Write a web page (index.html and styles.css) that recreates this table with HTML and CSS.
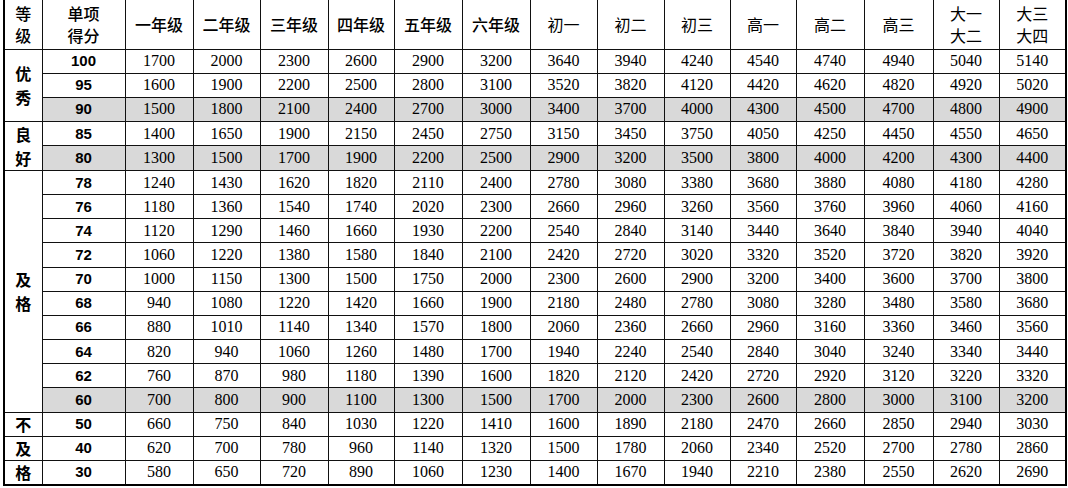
FILE: index.html
```html
<!DOCTYPE html>
<html lang="zh">
<head>
<meta charset="utf-8">
<title>跳绳评分表</title>
<link rel="stylesheet" href="styles.css">
</head>
<body>
<table class="score">
  <colgroup>
    <col class="c-grade"><col class="c-score">
    <col class="c68"><col class="c67"><col class="c68"><col class="c66"><col class="c68"><col class="c68">
    <col class="c67"><col class="c67"><col class="c66"><col class="c66"><col class="c68"><col class="c69"><col class="c66"><col class="c67">
  </colgroup>
  <thead>
    <tr class="head">
      <th class="hg">等<br>级</th>
      <th class="hg">单项<br>得分</th>
      <th>一年级</th><th>二年级</th><th>三年级</th><th>四年级</th><th>五年级</th><th>六年级</th>
      <th class="thin">初一</th><th class="thin">初二</th><th class="thin">初三</th>
      <th class="thin">高一</th><th class="thin">高二</th><th class="thin">高三</th>
      <th class="thin two">大一<br>大二</th><th class="thin two">大三<br>大四</th>
    </tr>
  </thead>
  <tbody>
    <tr class="grp-start"><td class="grp" rowspan="3">优<br>秀</td><td class="pts">100</td><td class="num">1700</td><td class="num">2000</td><td class="num">2300</td><td class="num">2600</td><td class="num">2900</td><td class="num">3200</td><td class="num">3640</td><td class="num">3940</td><td class="num">4240</td><td class="num">4540</td><td class="num">4740</td><td class="num">4940</td><td class="num">5040</td><td class="num">5140</td></tr>
    <tr><td class="pts">95</td><td class="num">1600</td><td class="num">1900</td><td class="num">2200</td><td class="num">2500</td><td class="num">2800</td><td class="num">3100</td><td class="num">3520</td><td class="num">3820</td><td class="num">4120</td><td class="num">4420</td><td class="num">4620</td><td class="num">4820</td><td class="num">4920</td><td class="num">5020</td></tr>
    <tr class="shade"><td class="pts">90</td><td class="num">1500</td><td class="num">1800</td><td class="num">2100</td><td class="num">2400</td><td class="num">2700</td><td class="num">3000</td><td class="num">3400</td><td class="num">3700</td><td class="num">4000</td><td class="num">4300</td><td class="num">4500</td><td class="num">4700</td><td class="num">4800</td><td class="num">4900</td></tr>

    <tr class="grp-start"><td class="grp" rowspan="2">良<br>好</td><td class="pts">85</td><td class="num">1400</td><td class="num">1650</td><td class="num">1900</td><td class="num">2150</td><td class="num">2450</td><td class="num">2750</td><td class="num">3150</td><td class="num">3450</td><td class="num">3750</td><td class="num">4050</td><td class="num">4250</td><td class="num">4450</td><td class="num">4550</td><td class="num">4650</td></tr>
    <tr class="shade"><td class="pts">80</td><td class="num">1300</td><td class="num">1500</td><td class="num">1700</td><td class="num">1900</td><td class="num">2200</td><td class="num">2500</td><td class="num">2900</td><td class="num">3200</td><td class="num">3500</td><td class="num">3800</td><td class="num">4000</td><td class="num">4200</td><td class="num">4300</td><td class="num">4400</td></tr>

    <tr class="grp-start"><td class="grp" rowspan="10">及<br>格</td><td class="pts">78</td><td class="num">1240</td><td class="num">1430</td><td class="num">1620</td><td class="num">1820</td><td class="num">2110</td><td class="num">2400</td><td class="num">2780</td><td class="num">3080</td><td class="num">3380</td><td class="num">3680</td><td class="num">3880</td><td class="num">4080</td><td class="num">4180</td><td class="num">4280</td></tr>
    <tr><td class="pts">76</td><td class="num">1180</td><td class="num">1360</td><td class="num">1540</td><td class="num">1740</td><td class="num">2020</td><td class="num">2300</td><td class="num">2660</td><td class="num">2960</td><td class="num">3260</td><td class="num">3560</td><td class="num">3760</td><td class="num">3960</td><td class="num">4060</td><td class="num">4160</td></tr>
    <tr><td class="pts">74</td><td class="num">1120</td><td class="num">1290</td><td class="num">1460</td><td class="num">1660</td><td class="num">1930</td><td class="num">2200</td><td class="num">2540</td><td class="num">2840</td><td class="num">3140</td><td class="num">3440</td><td class="num">3640</td><td class="num">3840</td><td class="num">3940</td><td class="num">4040</td></tr>
    <tr><td class="pts">72</td><td class="num">1060</td><td class="num">1220</td><td class="num">1380</td><td class="num">1580</td><td class="num">1840</td><td class="num">2100</td><td class="num">2420</td><td class="num">2720</td><td class="num">3020</td><td class="num">3320</td><td class="num">3520</td><td class="num">3720</td><td class="num">3820</td><td class="num">3920</td></tr>
    <tr><td class="pts">70</td><td class="num">1000</td><td class="num">1150</td><td class="num">1300</td><td class="num">1500</td><td class="num">1750</td><td class="num">2000</td><td class="num">2300</td><td class="num">2600</td><td class="num">2900</td><td class="num">3200</td><td class="num">3400</td><td class="num">3600</td><td class="num">3700</td><td class="num">3800</td></tr>
    <tr><td class="pts">68</td><td class="num">940</td><td class="num">1080</td><td class="num">1220</td><td class="num">1420</td><td class="num">1660</td><td class="num">1900</td><td class="num">2180</td><td class="num">2480</td><td class="num">2780</td><td class="num">3080</td><td class="num">3280</td><td class="num">3480</td><td class="num">3580</td><td class="num">3680</td></tr>
    <tr><td class="pts">66</td><td class="num">880</td><td class="num">1010</td><td class="num">1140</td><td class="num">1340</td><td class="num">1570</td><td class="num">1800</td><td class="num">2060</td><td class="num">2360</td><td class="num">2660</td><td class="num">2960</td><td class="num">3160</td><td class="num">3360</td><td class="num">3460</td><td class="num">3560</td></tr>
    <tr><td class="pts">64</td><td class="num">820</td><td class="num">940</td><td class="num">1060</td><td class="num">1260</td><td class="num">1480</td><td class="num">1700</td><td class="num">1940</td><td class="num">2240</td><td class="num">2540</td><td class="num">2840</td><td class="num">3040</td><td class="num">3240</td><td class="num">3340</td><td class="num">3440</td></tr>
    <tr><td class="pts">62</td><td class="num">760</td><td class="num">870</td><td class="num">980</td><td class="num">1180</td><td class="num">1390</td><td class="num">1600</td><td class="num">1820</td><td class="num">2120</td><td class="num">2420</td><td class="num">2720</td><td class="num">2920</td><td class="num">3120</td><td class="num">3220</td><td class="num">3320</td></tr>
    <tr class="shade"><td class="pts">60</td><td class="num">700</td><td class="num">800</td><td class="num">900</td><td class="num">1100</td><td class="num">1300</td><td class="num">1500</td><td class="num">1700</td><td class="num">2000</td><td class="num">2300</td><td class="num">2600</td><td class="num">2800</td><td class="num">3000</td><td class="num">3100</td><td class="num">3200</td></tr>

    <tr class="grp-start"><td class="grp single">不</td><td class="pts">50</td><td class="num">660</td><td class="num">750</td><td class="num">840</td><td class="num">1030</td><td class="num">1220</td><td class="num">1410</td><td class="num">1600</td><td class="num">1890</td><td class="num">2180</td><td class="num">2470</td><td class="num">2660</td><td class="num">2850</td><td class="num">2940</td><td class="num">3030</td></tr>
    <tr><td class="grp single">及</td><td class="pts">40</td><td class="num">620</td><td class="num">700</td><td class="num">780</td><td class="num">960</td><td class="num">1140</td><td class="num">1320</td><td class="num">1500</td><td class="num">1780</td><td class="num">2060</td><td class="num">2340</td><td class="num">2520</td><td class="num">2700</td><td class="num">2780</td><td class="num">2860</td></tr>
    <tr><td class="grp single">格</td><td class="pts">30</td><td class="num">580</td><td class="num">650</td><td class="num">720</td><td class="num">890</td><td class="num">1060</td><td class="num">1230</td><td class="num">1400</td><td class="num">1670</td><td class="num">1940</td><td class="num">2210</td><td class="num">2380</td><td class="num">2550</td><td class="num">2620</td><td class="num">2690</td></tr>
  </tbody>
</table>
</body>
</html>
```

FILE: styles.css
```css
html, body {
  margin: 0;
  padding: 0;
  background: #ffffff;
}

body {
  padding: 0 0 0 3px;
}

.score {
  border-collapse: collapse;
  table-layout: fixed;
  width: 1063px;
  border: 2px solid #000;
  border-top: 0;
  color: #000;
}

.c-grade { width: 38px; }
.c-score { width: 83px; }
.c66 { width: 66px; }
.c67 { width: 67px; }
.c68 { width: 68px; }
.c69 { width: 69px; }

.score th,
.score td {
  border: 1px solid #111;
  padding: 0;
  text-align: center;
  vertical-align: middle;
}

.score thead th {
  border-top: 0;
}

.score th {
  font-family: "Noto Sans CJK SC", sans-serif;
  font-size: 16px;
  font-weight: 500;
  line-height: 22px;
}

.score th.thin {
  font-weight: 400;
}

.head {
  height: 49px;
}

.score tbody tr {
  height: 24.17px;
}

.score td.num {
  font-family: "Liberation Serif", "DejaVu Serif", serif;
  font-size: 16px;
  line-height: 18px;
}

.score td.pts {
  font-family: "Liberation Sans", "DejaVu Sans", sans-serif;
  font-weight: 700;
  font-size: 15px;
  line-height: 18px;
}

.score td.grp {
  font-family: "Noto Sans CJK SC", sans-serif;
  font-weight: 700;
  font-size: 16px;
  line-height: 24px;
  background: #ffffff;
}

.score td.grp.single {
  line-height: 18px;
}

.shade td {
  background: #d9d9d9;
}
```
